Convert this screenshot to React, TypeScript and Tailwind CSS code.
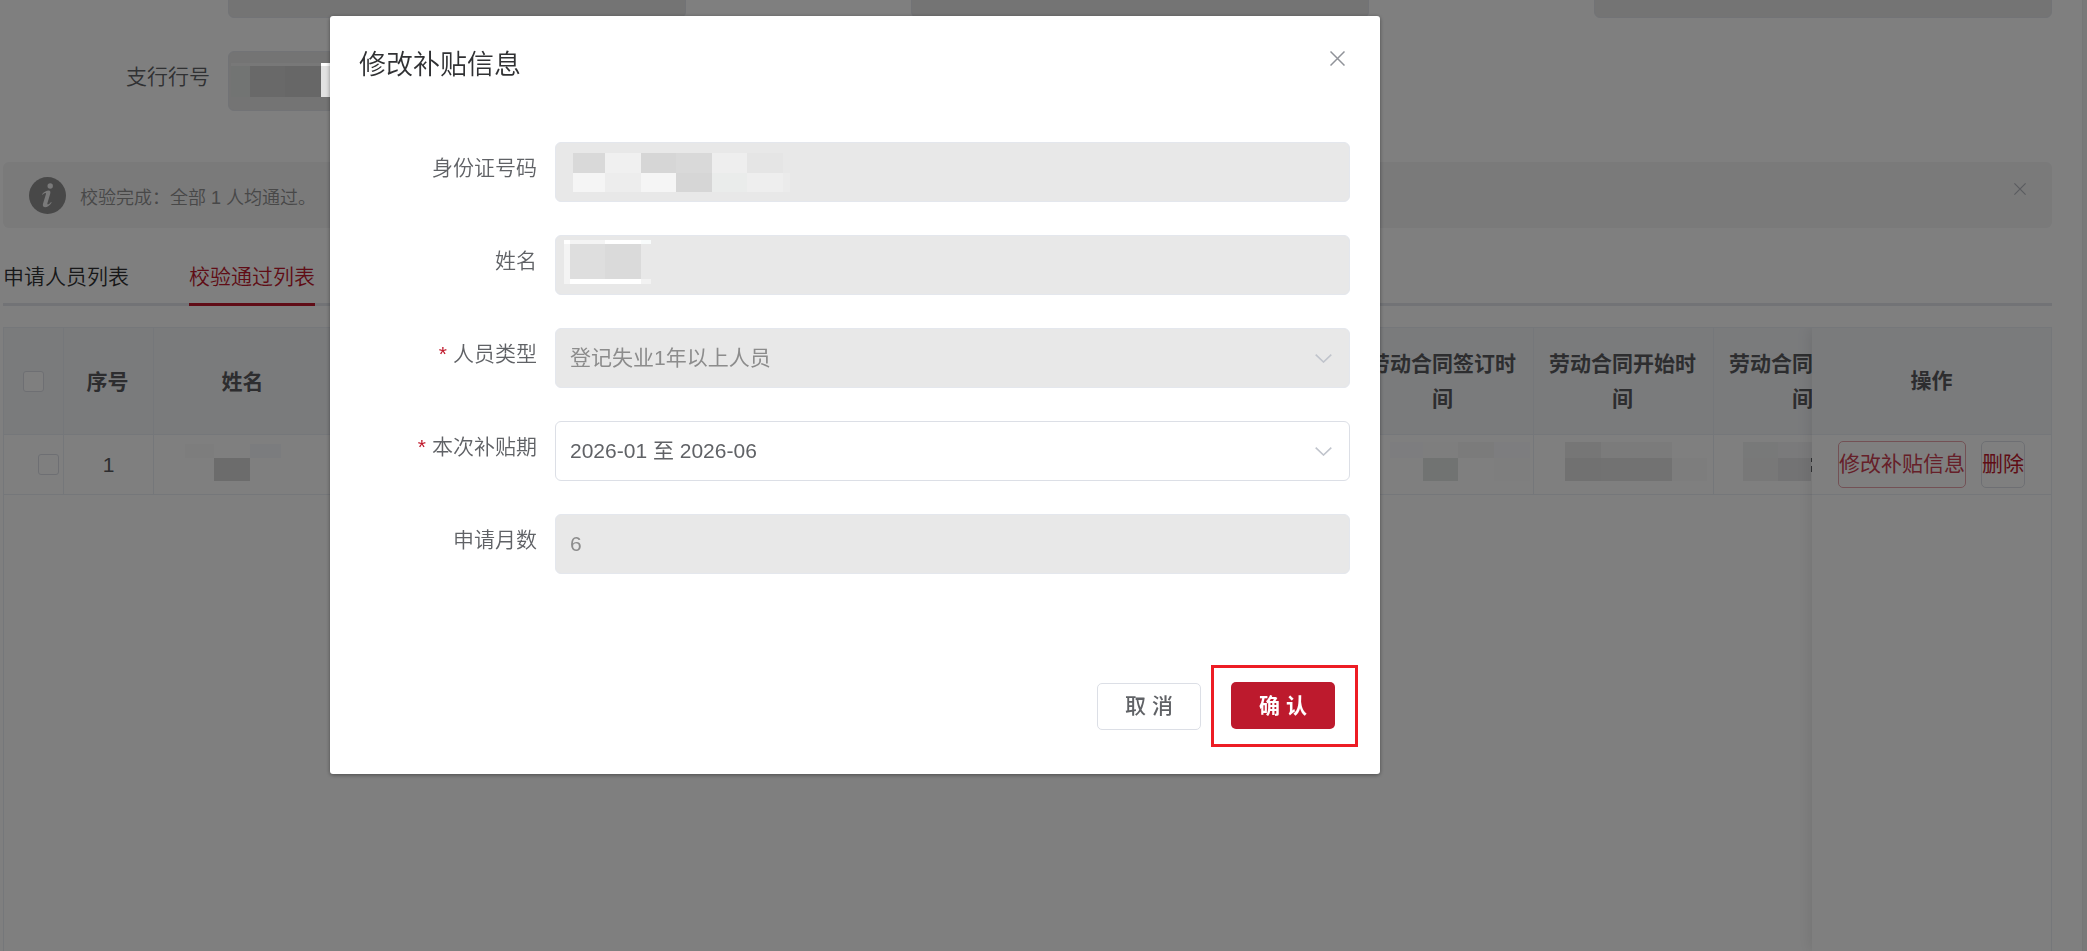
import { useState } from "react";

type Rect = [x: number, y: number, w: number, h: number, fill: string];

function Mosaic({ rects, className }: { rects: Rect[]; className: string }) {
  return (
    <svg aria-hidden="true" className={"pointer-events-none absolute overflow-visible " + className} width="1" height="1" shapeRendering="crispEdges">
      {rects.map(([x, y, w, h, fill], i) => (
        <rect key={i} x={x} y={y} width={w} height={h} fill={fill} />
      ))}
    </svg>
  );
}

function CloseIcon({ size }: { size: number }) {
  return (
    <svg width={size} height={size} viewBox="0 0 15 15" fill="none" stroke="currentColor" strokeWidth="1.5">
      <path d="M0.5 0.5 14.5 14.5M14.5 0.5 0.5 14.5" />
    </svg>
  );
}

function Chevron() {
  return (
    <svg className="pointer-events-none absolute top-[26px] right-[18px] text-[#c0c4cc]" width="17" height="9" viewBox="0 0 17 9" fill="none" stroke="currentColor" strokeWidth="1.6">
      <path d="M0.7 0.7 8.5 8 16.3 0.7" />
    </svg>
  );
}

function InfoIcon() {
  return (
    <svg width="37" height="37" viewBox="0 0 37 37" className="shrink-0">
      <circle cx="18.5" cy="18.5" r="18.5" fill="#909090" />
      <circle cx="21.2" cy="9" r="2.7" fill="#f4f4f5" />
      <path
        d="M13 17.2C15.2 14.6 17.6 13.4 19.6 13.4C21.4 13.4 21.7 14.8 21.2 16.7L18.4 26.2C18.2 27 18.4 27.4 18.9 27.4C19.8 27.4 21 26.2 22 24.9L22.7 25.4C20.9 28.3 18.4 30.2 16 30.2C14 30.2 13.5 28.6 14 26.8L16.9 17.3C17.1 16.5 16.9 16 16.3 16C15.6 16 14.6 16.8 13.7 17.8Z"
        fill="#f4f4f5"
      />
    </svg>
  );
}

const nameCell: Rect[] = [
  [32, 9, 29, 14, "#fbfbfb"],
  [97, 9, 31, 14, "#f6f8fc"],
  [61, 23, 36, 23, "#d8d8d8"],
];
const signCell: Rect[] = [
  [37, 7, 33, 16, "#fafbfe"],
  [70, 7, 35, 16, "#fdfdfd"],
  [105, 7, 36, 16, "#f6f6f6"],
  [141, 7, 36, 16, "#fafbfe"],
  [70, 23, 35, 23, "#e2e7e5"],
  [141, 23, 36, 23, "#fdfdfd"],
];
const startCell: Rect[] = [
  [32, 7, 36, 16, "#ececec"],
  [68, 7, 71, 16, "#f6f6f6"],
  [32, 23, 36, 23, "#e2e2e2"],
  [68, 23, 71, 23, "#e5e5e5"],
  [139, 23, 35, 23, "#fafafa"],
];
const endCell: Rect[] = [
  [30, 7, 35, 16, "#f0f3f2"],
  [65, 7, 34, 16, "#f4f4f6"],
  [30, 23, 35, 23, "#f0f0f0"],
  [65, 23, 33, 23, "#e6e6e8"],
  [98, 23, 1, 4, "#606266"],
  [98, 31, 1, 6, "#606266"],
];
const idField: Rect[] = [
  [18, 11, 32, 20, "#d9d9d9"],
  [50, 11, 36, 20, "#f0f0f0"],
  [86, 11, 35, 20, "#d6d6d6"],
  [121, 11, 36, 20, "#d9d9d9"],
  [157, 11, 35, 20, "#eeeeee"],
  [192, 11, 36, 20, "#e5e5e5"],
  [18, 31, 32, 19, "#f5f5f5"],
  [50, 31, 36, 19, "#ededed"],
  [86, 31, 35, 19, "#f5f5f5"],
  [121, 31, 36, 19, "#d6d6d6"],
  [157, 31, 35, 19, "#eaeceb"],
  [192, 31, 36, 19, "#eeeeee"],
  [228, 31, 7, 19, "#ebebeb"],
];
const nameField: Rect[] = [
  [9, 5, 6, 4, "#ffffff"],
  [9, 9, 6, 40, "#f4f4f4"],
  [15, 5, 35, 4, "#f4f4f4"],
  [50, 5, 36, 4, "#ffffff"],
  [86, 5, 10, 4, "#f8fbfb"],
  [15, 9, 35, 35, "#dedede"],
  [50, 9, 36, 35, "#dadada"],
  [15, 44, 71, 5, "#ffffff"],
  [86, 44, 10, 5, "#f2f2f2"],
];
const branchField: Rect[] = [
  [3, 12, 90, 3, "#f0f0f0"],
  [3, 15, 19, 31, "#e4e8e6"],
  [22, 15, 35, 31, "#d2d2d2"],
  [57, 15, 36, 31, "#cecece"],
];
const branchEdge: Rect[] = [
  [0, 0, 9, 3, "#ffffff"],
  [0, 3, 9, 31, "#e2e2e2"],
];

const th = "border-r border-b border-[#ebeef5] bg-[#f4f6f9] pr-[16px] pl-[14px] font-bold leading-[35px]";
const td = "relative h-[60px] border-r border-b border-[#ebeef5] p-0 text-center";
const box = "block size-[21px] appearance-none rounded-[3px] border border-[#dcdfe6] bg-white checked:bg-[#c0192c]";
const fieldBox = "h-[60px] w-full appearance-none rounded-[6px] border px-[14px] text-[21px] outline-none";
const disabledBox = fieldBox + " border-[#e4e7ed] bg-[#e8e8e8] text-[#8c8c8c] opacity-100";

function TopField({ label, id }: { label?: string; id: string }) {
  return (
    <div className="grid grid-cols-[225px_minmax(0,1fr)]">
      <label htmlFor={id} className="pr-[18px] text-right leading-[52px] font-[350] text-[#606266]">
        {label}
      </label>
      <div className="relative">
        <input id={id} disabled aria-label={label} className={disabledBox} />
        {label && <Mosaic rects={branchField} className="top-0 left-0" />}
      </div>
    </div>
  );
}

function Page() {
  return (
    <div className="flex h-screen overflow-hidden bg-white">
      <main className="flex min-w-0 flex-1 flex-col pr-[30px] pl-[3px]">
        <div className="-mt-[42px] grid shrink-0 grid-cols-3 gap-y-[33px]">
          <TopField id="bank" />
          <TopField id="account" />
          <TopField id="branch" />
          <TopField id="branch-no" label="支行行号" />
        </div>

        <div role="status" className="mt-[51px] flex h-[66px] shrink-0 items-center rounded-[6px] bg-[#f4f4f5] pr-[26px] pl-[26px]">
          <InfoIcon />
          <p className="ml-[14px] flex-1 pt-[6px] text-[18px] font-[350] text-[#909090]">校验完成：全部 1 人均通过。</p>
          <button type="button" aria-label="关闭提示" className="mb-3 text-[#b4b8bf]">
            <CloseIcon size={12} />
          </button>
        </div>

        <nav className="mt-[24px] flex h-[54px] shrink-0 gap-[60px] border-b-[3px] border-[#e4e7ed]">
          <a href="#applicants" className="leading-[50px] font-[350] text-[#303133]">
            申请人员列表
          </a>
          <a href="#passed" className="h-[54px] border-b-[3px] border-[#c0192c] leading-[50px] font-[350] text-[#c0192c]">
            校验通过列表
          </a>
        </nav>

        <div className="mt-[21px] flex min-h-0 flex-1 overflow-hidden border-t border-l border-[#ebeef5] text-[#5a5b5e]">
          <div className="min-w-0 flex-1 overflow-hidden">
            <table className="w-[1890px] table-fixed border-separate border-spacing-0">
              <colgroup>
                <col className="w-[60px]" />
                <col className="w-[90px]" />
                <col className="w-[180px]" />
                <col className="w-[1020px]" />
                <col className="w-[180px]" />
                <col className="w-[180px]" />
                <col className="w-[180px]" />
              </colgroup>
              <thead>
                <tr className="h-[107px]">
                  <th className="border-r border-b border-[#ebeef5] bg-[#f4f6f9] p-0 pl-[19px]">
                    <input type="checkbox" aria-label="全选" className={box} />
                  </th>
                  <th className={th}>序号</th>
                  <th className={th}>姓名</th>
                  <th className={th}></th>
                  <th className={th}>劳动合同签订时间</th>
                  <th className={th}>劳动合同开始时间</th>
                  <th className={th}>劳动合同结束时间</th>
                </tr>
              </thead>
              <tbody>
                <tr>
                  <td className={td}>
                    <div className="flex justify-end pr-1">
                      <input type="checkbox" aria-label="选择第 1 行" className={box} />
                    </div>
                  </td>
                  <td className={td}>1</td>
                  <td className={td}>
                    <Mosaic rects={nameCell} className="top-0 -left-px" />
                  </td>
                  <td className={td}></td>
                  <td className={td}>
                    <Mosaic rects={signCell} className="top-0 -left-px" />
                  </td>
                  <td className={td}>
                    <Mosaic rects={startCell} className="top-0 -left-px" />
                  </td>
                  <td className={td}>
                    <Mosaic rects={endCell} className="top-0 -left-px" />
                  </td>
                </tr>
              </tbody>
            </table>
          </div>
          <div className="relative w-[240px] shrink-0 border-r border-[#ebeef5] bg-white shadow-[0_0_15px_rgba(0,0,0,0.12)]">
            <table className="w-full table-fixed border-separate border-spacing-0">
              <thead>
                <tr className="h-[107px]">
                  <th className="border-b border-[#ebeef5] bg-[#f4f6f9] font-bold">操作</th>
                </tr>
              </thead>
              <tbody>
                <tr>
                  <td className="h-[60px] border-b border-[#ebeef5] p-0">
                    <div className="flex justify-center gap-[15px]">
                      <button type="button" className="h-[47px] w-[128px] rounded-[5px] border border-[#e6a3ab] pb-[2px] whitespace-nowrap text-[#cc4052]">
                        修改补贴信息
                      </button>
                      <button type="button" className="h-[47px] w-[44px] rounded-[5px] border border-[#dcdfe6] pb-[2px] whitespace-nowrap text-[#c0192c]">
                        删除
                      </button>
                    </div>
                  </td>
                </tr>
              </tbody>
            </table>
          </div>
        </div>
      </main>
      <div className="w-[5px] shrink-0 border-l border-[#ececec] bg-[#f3f3f3]" />
    </div>
  );
}

const labelCls = "pr-[18px] text-right leading-[52px] font-[350] text-[#606266]";

function Star() {
  return <span className="mr-[6px] text-[#c0192c]">*</span>;
}

function Dialog() {
  const [period, setPeriod] = useState("2026-01 至 2026-06");
  return (
    <div className="fixed inset-0 overflow-hidden bg-black/50 pt-[16px] pl-[330px]">
      <Mosaic rects={branchEdge} className="top-[63px] left-[321px]" />
      <section
        role="dialog"
        aria-labelledby="dialog-title"
        className="relative w-full max-w-[1050px] rounded-[3px] bg-white pb-[27px] shadow-[0_1px_4px_rgba(0,0,0,0.4)]"
      >
        <header className="flex items-start justify-between pt-[27px] pr-[35px] pl-[29px]">
          <h2 id="dialog-title" className="pt-[2px] text-[27px] leading-[40px] font-[350] text-[#303133]">
            修改补贴信息
          </h2>
          <button type="button" aria-label="关闭" className="mt-2 text-[#909399]">
            <CloseIcon size={15} />
          </button>
        </header>

        <form className="mt-[57px] grid grid-cols-[195px_minmax(0,1fr)] gap-y-[33px] px-[30px]">
          <label htmlFor="id-no" className={labelCls}>
            身份证号码
          </label>
          <div className="relative h-[60px]">
            <input id="id-no" disabled className={disabledBox} />
            <Mosaic rects={idField} className="top-0 left-0" />
          </div>

          <label htmlFor="name" className={labelCls}>
            姓名
          </label>
          <div className="relative h-[60px]">
            <input id="name" disabled className={disabledBox} />
            <Mosaic rects={nameField} className="top-0 left-0" />
          </div>

          <label htmlFor="kind" className={labelCls}>
            <Star />
            人员类型
          </label>
          <div className="relative h-[60px]">
            <select id="kind" disabled className={disabledBox}>
              <option>登记失业1年以上人员</option>
            </select>
            <Chevron />
          </div>

          <label htmlFor="period" className={labelCls}>
            <Star />
            本次补贴期
          </label>
          <div className="relative h-[60px]">
            <select
              id="period"
              value={period}
              onChange={(e) => setPeriod(e.target.value)}
              className={fieldBox + " border-[#dcdfe6] bg-white text-[#606266]"}
            >
              <option>2026-01 至 2026-06</option>
            </select>
            <Chevron />
          </div>

          <label htmlFor="months" className={labelCls}>
            申请月数
          </label>
          <div className="relative h-[60px]">
            <input id="months" disabled value="6" className={disabledBox} />
          </div>
        </form>

        <footer className="mt-[91px] flex items-center justify-end gap-[10px] pr-[22px]">
          <button type="button" className="h-[47px] w-[104px] rounded-[5px] border border-[#dcdfe6] bg-white font-medium text-[#606266]">
            取 消
          </button>
          <div className="border-[3px] border-[#ed1c24] pt-[14px] pr-[20px] pb-[15px] pl-[17px]">
            <button type="button" className="block h-[47px] w-[104px] rounded-[5px] bg-[#bd1a2d] font-bold text-white">
              确 认
            </button>
          </div>
        </footer>
      </section>
    </div>
  );
}

export default function App() {
  return (
    <div className="font-['Liberation_Sans','Noto_Sans_CJK_SC',sans-serif] text-[21px]">
      <Page />
      <Dialog />
    </div>
  );
}
